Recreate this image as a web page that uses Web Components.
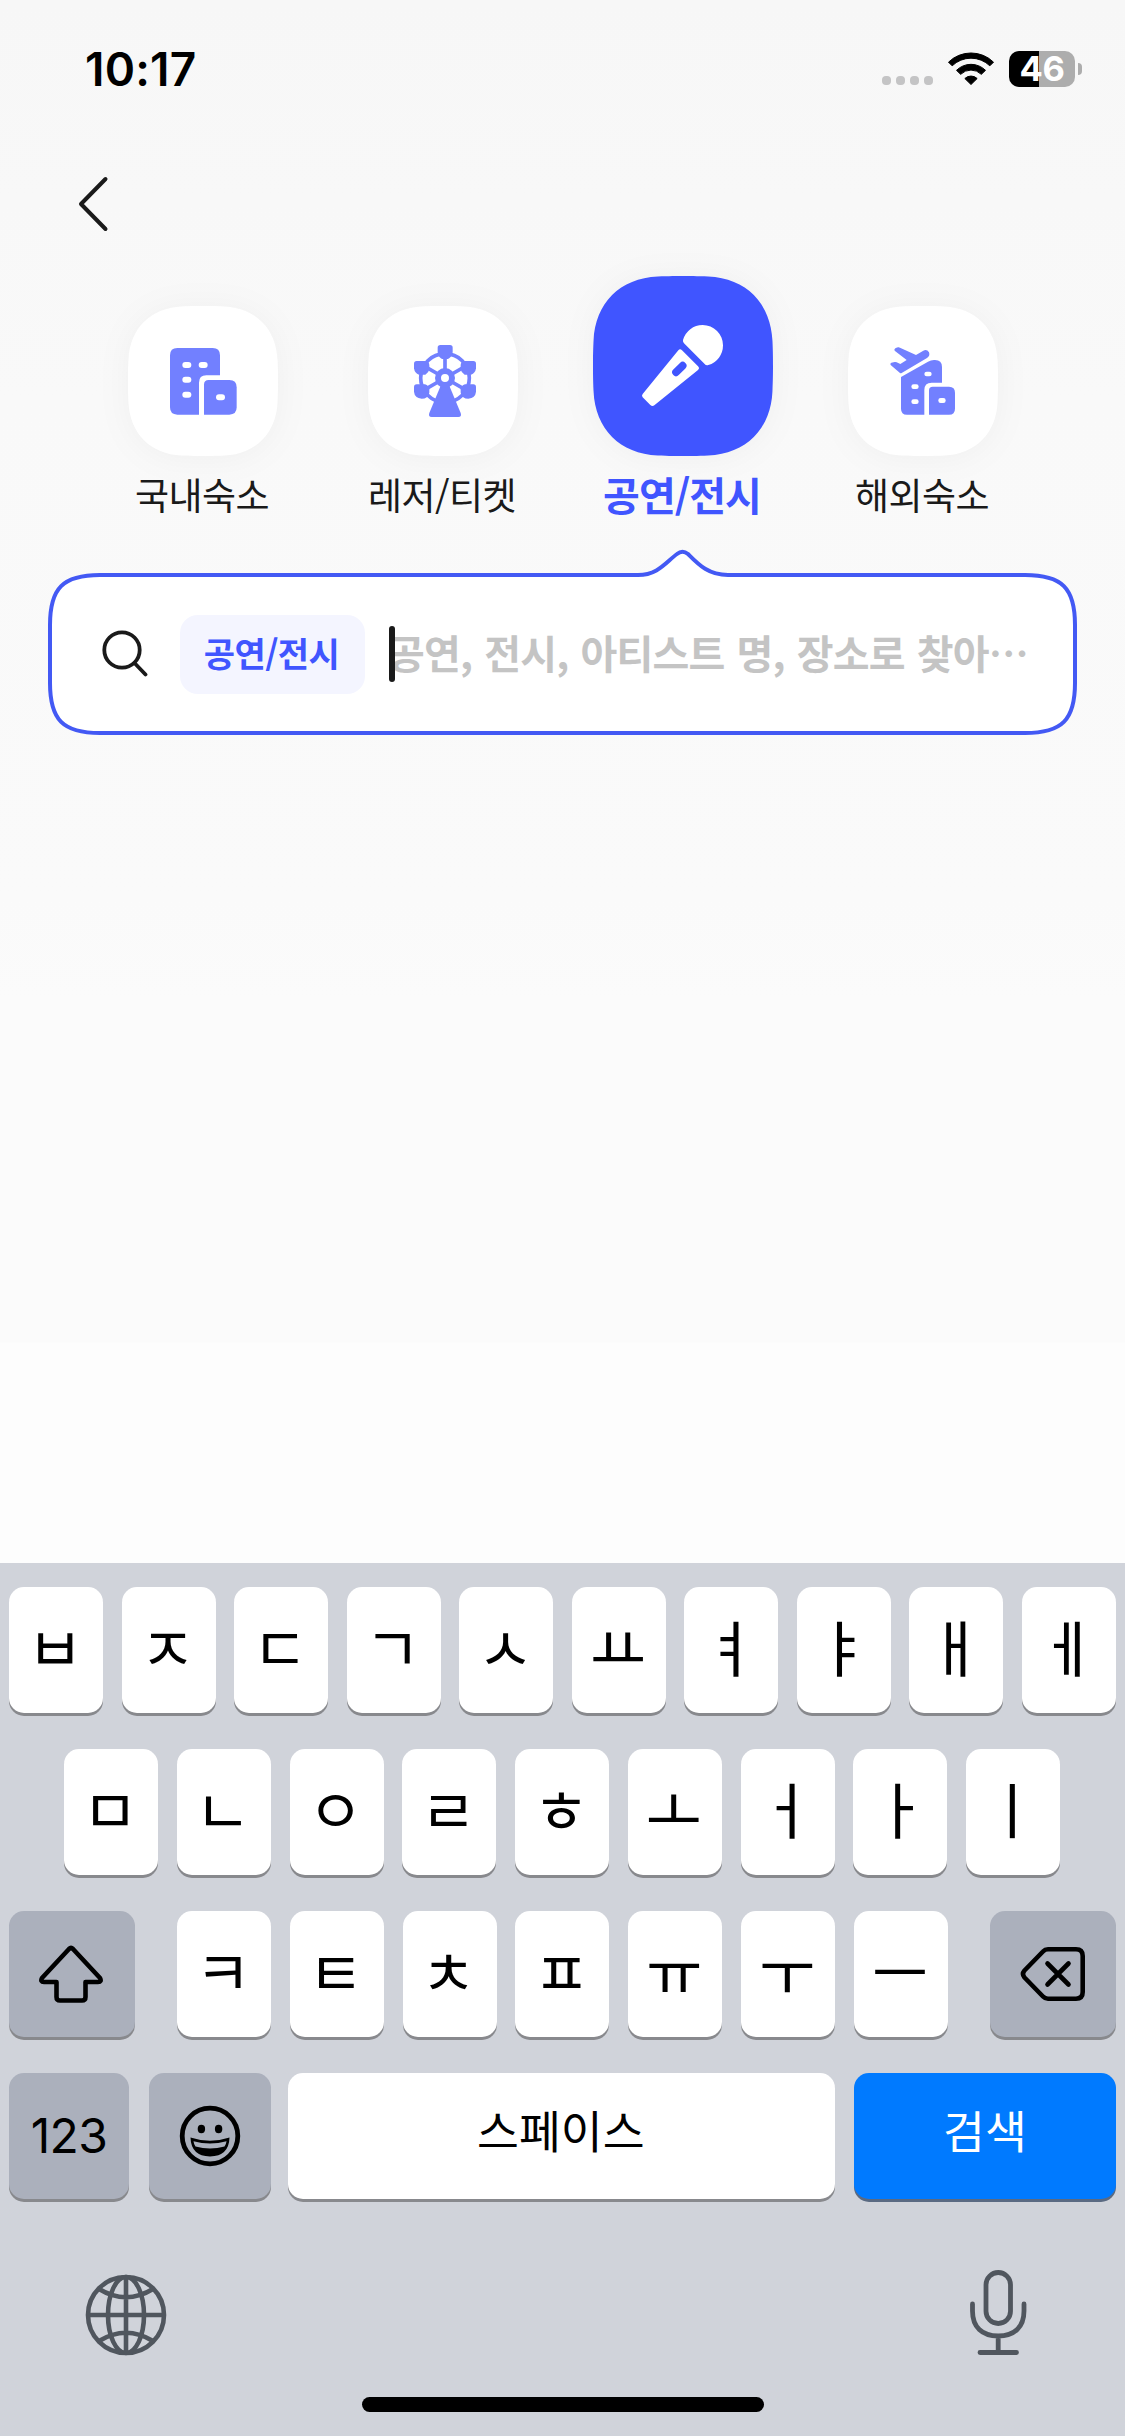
<!DOCTYPE html>
<html lang="ko">
<head>
<meta charset="utf-8">
<title>검색</title>
<style>
html,body{margin:0;padding:0}
body{width:1125px;height:2436px;overflow:hidden;font-family:"Noto Sans CJK KR","Noto Sans",sans-serif;color:#1a1a1a}
</style>
</head>
<body>
<search-screen></search-screen>
<script>
const define = (name, markup) => {
  const tpl = document.createElement('template');
  tpl.innerHTML = markup;
  customElements.define(name, class extends HTMLElement {
    constructor() {
      super();
      this.attachShadow({ mode: 'open' }).append(tpl.content.cloneNode(true));
    }
  });
};

/* Status bar: clock, signal dots, wifi, battery */
define('status-bar', `
<style>
:host{display:flex;align-items:center;height:138px;box-sizing:border-box;padding:0 43px 0 85px;font-family:Inter,sans-serif;color:#000}
.time{font-size:46px;font-weight:600;line-height:60px;letter-spacing:.2px;flex:1}
.dots{display:flex;gap:5px;margin:22px 15px 0 0}
.dots i{flex:none;width:9px;height:9px;border-radius:4px;background:#c4c4c5}
.wifi{display:block;width:46px;height:34px;margin-right:15px}
.bat{width:66px;height:36px;border-radius:10px;background:linear-gradient(90deg,#000 30px,#adadad 30px);color:#fff;font-size:34.500px;font-weight:650;line-height:36px;text-align:center;letter-spacing:-.3px}
.nub{display:block;width:4px;height:12px;border-radius:0 5px 5px 0;background:#adadad;margin-left:3px}
</style>
<span class="time">10:17</span>
<span class="dots"><i></i><i></i><i></i><i></i></span>
<svg class="wifi" viewBox="264 66 138 102"><g stroke="#000" stroke-linejoin="round" stroke-width="3">
<path d="M265.500 96.500A96.500 96.500 0 0 1 400.500 96.500L389.500 107.500A81 81 0 0 0 276.500 107.500Z"/>
<path d="M289.500 121A61.500 61.500 0 0 1 376.500 121L364 133A44 44 0 0 0 302 133Z"/>
<path d="M314.500 145.500A27 27 0 0 1 351.500 145.500L333 163.500Z"/></g></svg>
<span class="bat">46</span><i class="nub"></i>`);

define('nav-bar', `
<style>
:host{display:flex;align-items:center;height:132px;padding-left:77px}
svg{display:block;width:32px;height:56px}
</style>
<svg viewBox="0 0 32 56"><path d="M28.500 3L4 28L28.500 53" fill="none" stroke="#1a1a1a" stroke-width="4" stroke-linecap="round" stroke-linejoin="round"/></svg>`);

/* One category: squircle tile with its icon, and a label under it */
define('category-tab', `
<style>
:host{display:flex;flex-direction:column;align-items:center;color:#1a1a1a;font-size:37px;--tile:150px;--fill:#fff}
:host([active]){color:#4055ff;font-size:40px;font-weight:700;--tile:180px;--fill:#4055ff}
.tile{display:grid;width:var(--tile);height:var(--tile);filter:drop-shadow(0 2px 16px rgba(0,0,0,.04))}
.tile>*{grid-area:1/1;display:block;width:var(--tile);height:var(--tile)}
.label{height:77px;line-height:77px;padding:0 2px 3px 0;white-space:nowrap;letter-spacing:-.5px}
:host([active]) .label{letter-spacing:-1px}
</style>
<div class="tile">
<svg viewBox="0 0 100 100"><path fill="var(--fill)" d="M0 50C0 47 0 42 .3 36C1.200 15 15 1.200 36 .3C42 0 47 0 50 0S58 0 64 .3C85 1.200 98.800 15 99.700 36C100 42 100 47 100 50S100 58 99.700 64C98.800 85 85 98.800 64 99.700C58 100 53 100 50 100S42 100 36 99.700C15 98.800 1.200 85 .3 64C0 58 0 53 0 50Z"/></svg>
<slot name="icon"></slot>
</div>
<div class="label"><slot></slot></div>`);

define('icon-building', `
<style>:host,svg{display:block;width:100%;height:100%}</style>
<svg viewBox="84 135 450 450"><g fill="#7280ff">
<path d="M232 261H338Q360 261 360 283V343H319Q297 343 297 365V461H232Q210 461 210 439V283Q210 261 232 261Z"/>
<path d="M326 357H388Q410 357 410 379V439Q410 461 388 461H312V371Q312 357 326 357Z"/></g>
<g fill="#fff"><rect x="247" y="303" width="27" height="18" rx="9"/><rect x="296" y="303" width="27" height="18" rx="9"/><rect x="247" y="347" width="27" height="18" rx="9"/><rect x="247" y="392" width="27" height="18" rx="9"/><rect x="348" y="400" width="27" height="18" rx="9"/></g></svg>`);

define('icon-wheel', `
<style>:host,svg{display:block;width:100%;height:100%}</style>
<svg viewBox="804 135 450 450"><g fill="none" stroke="#7280ff">
<circle cx="1035" cy="351" r="73" stroke-width="11"/>
<path stroke-width="11" d="M1035 351V280M1035 351L1105 311M1035 351L1105 391M1035 351L965 311M1035 351L965 391"/></g>
<path fill="#fff" d="M1008 430L990 424L975 470H1095L1080 424L1062 430Z"/>
<g fill="#7280ff">
<path d="M1021 252H1050Q1058 252 1058 260V273Q1056 288 1044 294H1026Q1014 288 1013 273V260Q1013 252 1021 252Z"/>
<path d="M950 300H975Q987 300 988 312V325Q986 336 976 341H957Q944 337 942 322V308Q942 300 950 300Z"/>
<path d="M1120 300H1095Q1083 300 1082 312V325Q1084 336 1094 341H1113Q1126 337 1128 322V308Q1128 300 1120 300Z"/>
<path d="M950 370H975Q987 374 988 385V395Q984 413 965 413Q944 411 942 392V378Q942 370 950 370Z"/>
<path d="M1120 370H1095Q1083 374 1082 385V395Q1086 413 1105 413Q1126 411 1128 392V378Q1128 370 1120 370Z"/>
<path d="M1022 374H1048L1082 456Q1086 468 1075 468H995Q984 468 988 456Z"/></g>
<circle cx="1035" cy="351" r="21" fill="#fff" stroke="#7280ff" stroke-width="18"/></svg>`);

define('icon-mic', `
<style>:host,svg{display:block;width:100%;height:100%}</style>
<svg viewBox="99 48 540 540"><g fill="#fff">
<path d="M369 240A61 61 0 0 1 428 195A61 61 0 0 1 489 256A61 61 0 0 1 445 315Q438 317 434 312L372 250Q368 246 369 240Z"/>
<path d="M355 271Q360 265 366 271L414 319Q420 325 414 330L283 436Q277 441 271 435L248 412Q244 408 248 402Z"/></g>
<path d="M348 337L368 317" stroke="#4055ff" stroke-width="23" stroke-linecap="round"/></svg>`);

define('icon-abroad', `
<style>:host,svg{display:block;width:100%;height:100%}</style>
<svg viewBox="864 135 450 450"><g fill="#7280ff">
<path d="M1041 461H1093V387Q1093 365 1115 365H1146V318Q1146 297 1125 297Q1114 296 1104 302L1023 348V443Q1023 461 1041 461Z"/>
<path d="M1118 377H1167Q1185 377 1185 395V443Q1185 461 1167 461H1107V388Q1107 377 1118 377Z"/>
<path d="M1020 336L992 312Q989 308 994 305L1004 303Q1007 302 1010 304L1021 309L1040 297L1004 269Q1001 264 1007 261L1014 259Q1017 258 1020 260L1068 282L1090 269Q1101 264 1107 274Q1111 285 1101 291L1025 336Q1022 338 1020 336Z"/></g>
<g fill="#fff"><rect x="1093" y="332" width="22" height="14" rx="7"/><rect x="1054" y="370" width="22" height="14" rx="7"/><rect x="1054" y="415" width="22" height="14" rx="7"/><rect x="1135" y="411" width="22" height="15" rx="7"/></g></svg>`);

/* Search field, its outline rises to a pointer under the active category */
define('search-field', `
<style>
:host{display:grid;width:1029px;height:189px;margin:12px 0 0 48px}
:host>*{grid-area:1/1}
svg{display:block}
.row{display:flex;align-items:center;box-sizing:border-box;padding:23px 40px 0 53px}
.glass{width:48px;height:48px;flex:none;margin-bottom:3px}
.chip{box-sizing:border-box;width:185px;height:79px;margin:0 24px 0 31px;padding-right:2px;border-radius:18px;background:#f4f5ff;color:#4055ff;font-weight:700;font-size:34px;line-height:75px;text-align:center;letter-spacing:-.6px;white-space:nowrap;flex:none}
.caret{width:6px;height:56px;border-radius:3px;background:#1a1a1a;flex:none;z-index:1}
.hint{margin:0 0 5px -7px;color:#c4c4c4;font-size:40px;font-weight:600;line-height:80px;white-space:nowrap;letter-spacing:-.8px;word-spacing:1.600px}
</style>
<svg class="frame" viewBox="48 548 1029 189"><path fill="#fff" stroke="#4359f4" stroke-width="4" d="M100 575H638C658 575 666 562 677 554Q682.500 549.500 688 554C698 564 708 575 728 575H1025C1062 575 1075 588 1075 625V683C1075 720 1062 733 1025 733H100C63 733 50 720 50 683V625C50 588 63 575 100 575Z"/></svg>
<div class="row">
<svg class="glass" viewBox="101 628 48 48"><g fill="none" stroke="#1a1a1a" stroke-width="3.800" stroke-linecap="round"><circle cx="122" cy="649" r="17.700"/><path d="M134.500 662L145.500 673.500"/></g></svg>
<span class="chip"><slot name="scope"></slot></span>
<i class="caret"></i>
<span class="hint"><slot></slot></span>
</div>`);

/* Keyboard key */
define('kb-key', `
<style>
:host{display:flex;align-items:center;justify-content:center;box-sizing:border-box;width:94px;height:126px;border-radius:15px;background:#fff;box-shadow:0 3px 0 #88898d;color:#000;font-size:61px;flex:none;line-height:126px;white-space:nowrap}
:host([dark]){background:#abb0bc}
:host([blue]){background:#007aff;color:#fff;box-shadow:0 3px 0 #5a6a82}
::slotted(svg){display:block}
span{display:flex;margin:-20px 1px var(--lift,-12px) -1px}
:host([dark]) span{margin:0}
</style><span><slot></slot></span>`);

define('kb-row', `
<style>:host{display:flex;justify-content:space-between;height:126px;margin-bottom:36px}</style><slot></slot>`);

define('soft-keyboard', `
<style>
:host{display:flex;flex-direction:column;height:873px;box-sizing:border-box;padding:24px 9px 0;background:#d0d3da}
.r2{margin-left:55px;margin-right:56px}
.mid{display:flex;justify-content:space-between;width:771px}
.tools{display:flex;justify-content:space-between;padding:30px 88px 0 75px;height:130px}
.home{width:402px;height:15px;border-radius:8px;background:#000;margin:2px auto 0}
.sym{width:120px;font-family:Inter,sans-serif;font-size:48px;letter-spacing:-.6px}
.emo{width:122px;margin:0 -1px 0 1px}.space{width:547px;font-size:45.500px;--lift:-5px}.go{width:262px;font-size:45.500px;--lift:-5px;padding-left:2px}
.wide{width:126px}
</style>
<kb-row><kb-key>ㅂ</kb-key><kb-key>ㅈ</kb-key><kb-key>ㄷ</kb-key><kb-key>ㄱ</kb-key><kb-key>ㅅ</kb-key><kb-key>ㅛ</kb-key><kb-key>ㅕ</kb-key><kb-key>ㅑ</kb-key><kb-key>ㅐ</kb-key><kb-key>ㅔ</kb-key></kb-row>
<kb-row class="r2"><kb-key>ㅁ</kb-key><kb-key>ㄴ</kb-key><kb-key>ㅇ</kb-key><kb-key>ㄹ</kb-key><kb-key>ㅎ</kb-key><kb-key>ㅗ</kb-key><kb-key>ㅓ</kb-key><kb-key>ㅏ</kb-key><kb-key>ㅣ</kb-key></kb-row>
<kb-row><kb-key dark class="wide"><svg width="66" height="58" viewBox="1 0 66 58"><path d="M31 4Q33 2 35 4L62 33Q64 37 60 37H47.500V52Q47.500 55.500 44 55.500H22Q18.500 55.500 18.500 52V37H6Q2 37 4 33Z" fill="none" stroke="#000" stroke-width="4.600" stroke-linejoin="round"/></svg></kb-key>
<div class="mid"><kb-key>ㅋ</kb-key><kb-key>ㅌ</kb-key><kb-key>ㅊ</kb-key><kb-key>ㅍ</kb-key><kb-key>ㅠ</kb-key><kb-key>ㅜ</kb-key><kb-key>ㅡ</kb-key></div>
<kb-key dark class="wide"><svg width="66" height="56" viewBox="0 0 66 56"><g fill="none" stroke="#000" stroke-width="4.600" stroke-linecap="round" stroke-linejoin="round"><path d="M28 3.300H56Q62.700 3.300 62.700 10V46Q62.700 52.700 56 52.700H28Q25 52.700 23 50.500L4.500 31.500Q1.500 28 4.500 24.500L23 5.500Q25 3.300 28 3.300Z"/><path d="M27.500 17.500L48.500 38.500M48.500 17.500L27.500 38.500"/></g></svg></kb-key></kb-row>
<kb-row><kb-key dark class="sym">123</kb-key><kb-key dark class="emo"><svg width="62" height="62" viewBox="0 0 62 62"><circle cx="31" cy="31" r="27.800" fill="none" stroke="#000" stroke-width="4.800"/><ellipse cx="22.400" cy="24" rx="3.700" ry="4.200"/><ellipse cx="39.600" cy="24" rx="3.700" ry="4.200"/><path d="M11.500 32.500Q31 39 50.500 32.500Q50 51 31 51.500Q12 51 11.500 32.500Z"/><path d="M14.500 36.200Q31 41 47.500 36.200Q47 40 45.500 41.500Q31 45.500 16.500 41.500Q15 40 14.500 36.200Z" fill="#abb0bc"/></svg></kb-key><kb-key class="space">스페이스</kb-key><kb-key blue class="go">검색</kb-key></kb-row>
<div class="tools">
<svg width="84" height="84" viewBox="-42 -42 84 84" style="margin-top:8px"><g fill="none" stroke="#50565e" stroke-width="4.600"><circle r="38"/><ellipse rx="18" ry="38"/><path d="M0 -38V38M-38 0H38M-27 -26Q0 -9.500 27 -26M-27 26Q0 9.500 27 26"/></g></svg>
<svg width="60" height="88" viewBox="968 2269 60 88" style="margin-top:4px"><g fill="none" stroke="#50565e" stroke-width="4.800" stroke-linecap="round"><rect x="986" y="2272.500" width="24.500" height="51" rx="12.250"/><path d="M972.500 2304V2311C972.500 2327 982 2336 998.200 2336S1024 2327 1024 2311V2304M998.200 2336V2352M980 2352.500H1016.500"/></g></svg>
</div>
<div class="home"></div>`);

define('search-screen', `
<style>
:host{display:flex;flex-direction:column;width:1125px;height:2436px;background:linear-gradient(#f7f7f7,#f9f9f9 400px,#fafafa 900px,#fbfbfb 1000px,#fbfbfb 1342px,#fdfdfd 1343px)}
.tabs{display:grid;grid-template-columns:repeat(4,240px);align-items:end;height:266px;margin-left:83px}
soft-keyboard{margin-top:auto}
</style>
<status-bar></status-bar>
<nav-bar></nav-bar>
<div class="tabs">
<category-tab><icon-building slot="icon"></icon-building>국내숙소</category-tab>
<category-tab><icon-wheel slot="icon"></icon-wheel>레저/티켓</category-tab>
<category-tab active><icon-mic slot="icon"></icon-mic>공연/전시</category-tab>
<category-tab><icon-abroad slot="icon"></icon-abroad>해외숙소</category-tab>
</div>
<search-field><span slot="scope">공연/전시</span>공연, 전시, 아티스트 명, 장소로 찾아⋯</search-field>
<soft-keyboard></soft-keyboard>`);
</script>
</body>
</html>
